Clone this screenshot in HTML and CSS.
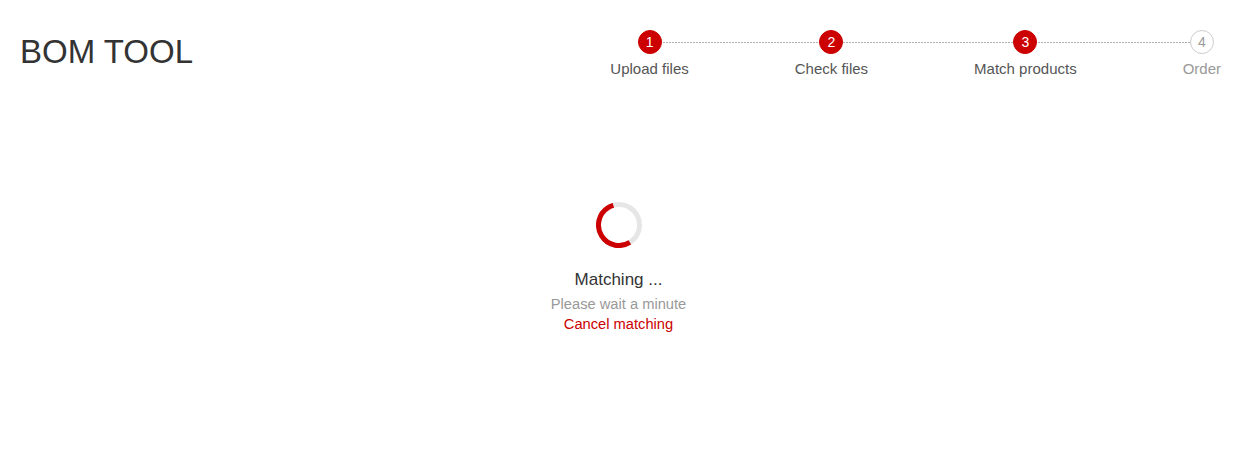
FILE: index.html
```html
<!DOCTYPE html>
<html lang="en">
<head>
<meta charset="UTF-8">
<meta name="viewport" content="width=device-width, initial-scale=1.0">
<title>BOM Tool</title>
<link rel="stylesheet" href="styles.css">
</head>
<body>

<div class="header">
    <h1 class="title">BOM TOOL</h1>
    <div class="steps">
        <div class="step done">
            <span class="step-num">1</span>
            <span class="step-label">Upload files</span>
        </div>
        <div class="step done">
            <span class="step-num">2</span>
            <span class="step-label">Check files</span>
        </div>
        <div class="step done">
            <span class="step-num">3</span>
            <span class="step-label">Match products</span>
        </div>
        <div class="step">
            <span class="step-num">4</span>
            <span class="step-label">Order</span>
        </div>
    </div>
</div>

<div class="matching">
    <svg class="spinner" width="46" height="46" viewBox="0 0 46 46">
        <circle cx="23" cy="23" r="20.5" fill="none" stroke="#e6e6e6" stroke-width="5"/>
        <circle cx="23" cy="23" r="20.5" fill="none" stroke="#cc0000" stroke-width="5"
                stroke-dasharray="69.8 200" transform="rotate(58 23 23)"/>
    </svg>
    <div class="matching-title">Matching ...</div>
    <div class="matching-hint">Please wait a minute</div>
    <a class="cancel-link" href="#">Cancel matching</a>
</div>

</body>
</html>
```

FILE: styles.css
```css
body {
  margin: 0;
  font-family: "Liberation Sans", Arial, sans-serif;
  background-color: #fff;
  color: #333;
}

.header {
  display: flex;
  justify-content: space-between;
  align-items: flex-start;
  padding: 30px 16px 0 20px;
}

.title {
  margin: 0;
  font-size: 33px;
  font-weight: normal;
  line-height: 44px;
  color: #333;
}

.steps {
  position: relative;
  display: flex;
  gap: 106px;
}

/* dotted line behind the step circles */
.steps::before {
  content: "";
  position: absolute;
  top: 12px;
  left: 38px;
  right: 18px;
  height: 1px;
  background: repeating-linear-gradient(to right, #b0b0b0 0 2px, transparent 2px 3px);
}

.step {
  position: relative;
  display: flex;
  flex-direction: column;
  align-items: center;
}

.step-num {
  width: 24px;
  height: 24px;
  line-height: 22px;
  border-radius: 50%;
  box-sizing: border-box;
  text-align: center;
  font-size: 14px;
  background-color: #fff;
  border: 1px solid #ccc;
  color: #999;
}

.step.done .step-num {
  background-color: #cc0000;
  border-color: #cc0000;
  color: #fff;
}

.step-label {
  margin-top: 6px;
  font-size: 15px;
  line-height: 18px;
  color: #999;
  white-space: nowrap;
}

.step.done .step-label {
  color: #555;
}

.matching {
  display: flex;
  flex-direction: column;
  align-items: center;
  padding-top: 124px;
}

.spinner {
  display: block;
}

.matching-title {
  margin-top: 22px;
  font-size: 17px;
  line-height: 20px;
  color: #333;
}

.matching-hint {
  margin-top: 4px;
  font-size: 14.7px;
  line-height: 20px;
  color: #999;
}

.cancel-link {
  font-size: 14.7px;
  line-height: 20px;
  color: #cc0000;
  text-decoration: none;
}
```
